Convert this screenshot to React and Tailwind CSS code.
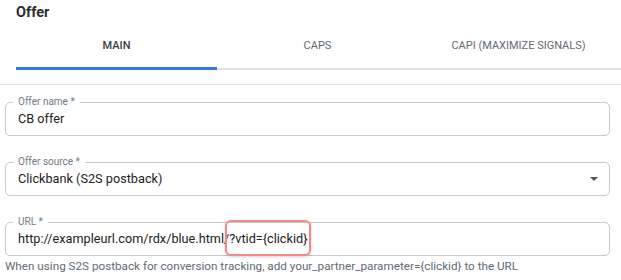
import React from "react";

function Field({ label, children, right }) {
  return (
    <fieldset className="border border-[#c9c9c9] rounded-[5px]">
      <legend className="ml-[7px] px-[5px] text-[10px] leading-[12px] text-[#6f7a86]">{label}</legend>
      <div className="h-[27px] pb-[5px] pl-[12px] pr-[11px] flex items-center justify-between text-[12.7px] text-[#222]">
        <div className="flex items-center">{children}</div>
        {right}
      </div>
    </fieldset>
  );
}

const tabs = ["MAIN", "CAPS", "CAPI (MAXIMIZE SIGNALS)"];

export default function App() {
  return (
    <div className="w-[621px] h-[280px] bg-white overflow-hidden font-['Roboto',sans-serif]">
      <div className="pl-4">
        <h2 className="text-[14.5px] leading-[25px] font-bold text-[#2b2f33]">Offer</h2>
        <div className="flex border-b-2 border-[#e3e3e3]">
          {tabs.map((t, i) => (
            <div
              key={t}
              className={`relative shrink-0 w-[201px] h-[43px] flex items-center justify-center text-[11px] ${
                i === 0 ? "font-medium text-[#3a3e44]" : "text-[#646a72]"
              }`}
            >
              {t}
              {i === 0 && <span className="absolute left-0 right-0 -bottom-[2px] h-[3px] bg-[#3a77e0]" />}
            </div>
          ))}
        </div>
      </div>
      <div className="mt-[14px] h-px bg-[#e8e8e8]" />
      <div className="px-[5px] mt-[11px] w-[615px] flex flex-col gap-[20px]">
        <Field label="Offer name *">CB offer</Field>
        <Field
          label="Offer source *"
          right={<span className="w-0 h-0 border-x-[4px] border-x-transparent border-t-[4px] border-t-[#455866]" />}
        >
          Clickbank (S2S postback)
        </Field>
        <div>
          <Field label="URL *">
            <span>http://exampleurl.com/rdx/blue.html/</span>
            <span className="relative">
              <span className="absolute -left-[4px] -right-[4px] -top-[9px] -bottom-[7px] border-2 border-[#f28a8a] rounded-[6px] shadow-[0_1px_3px_rgba(0,0,0,0.18)]" />
              <span className="relative">?vtid={"{clickid}"}</span>
            </span>
          </Field>
          <p className="mt-[2px] text-[11.7px] leading-[16px] text-[#5f6b77]">
            When using S2S postback for conversion tracking, add your_partner_parameter={"{clickid}"} to the URL
          </p>
        </div>
      </div>
    </div>
  );
}
